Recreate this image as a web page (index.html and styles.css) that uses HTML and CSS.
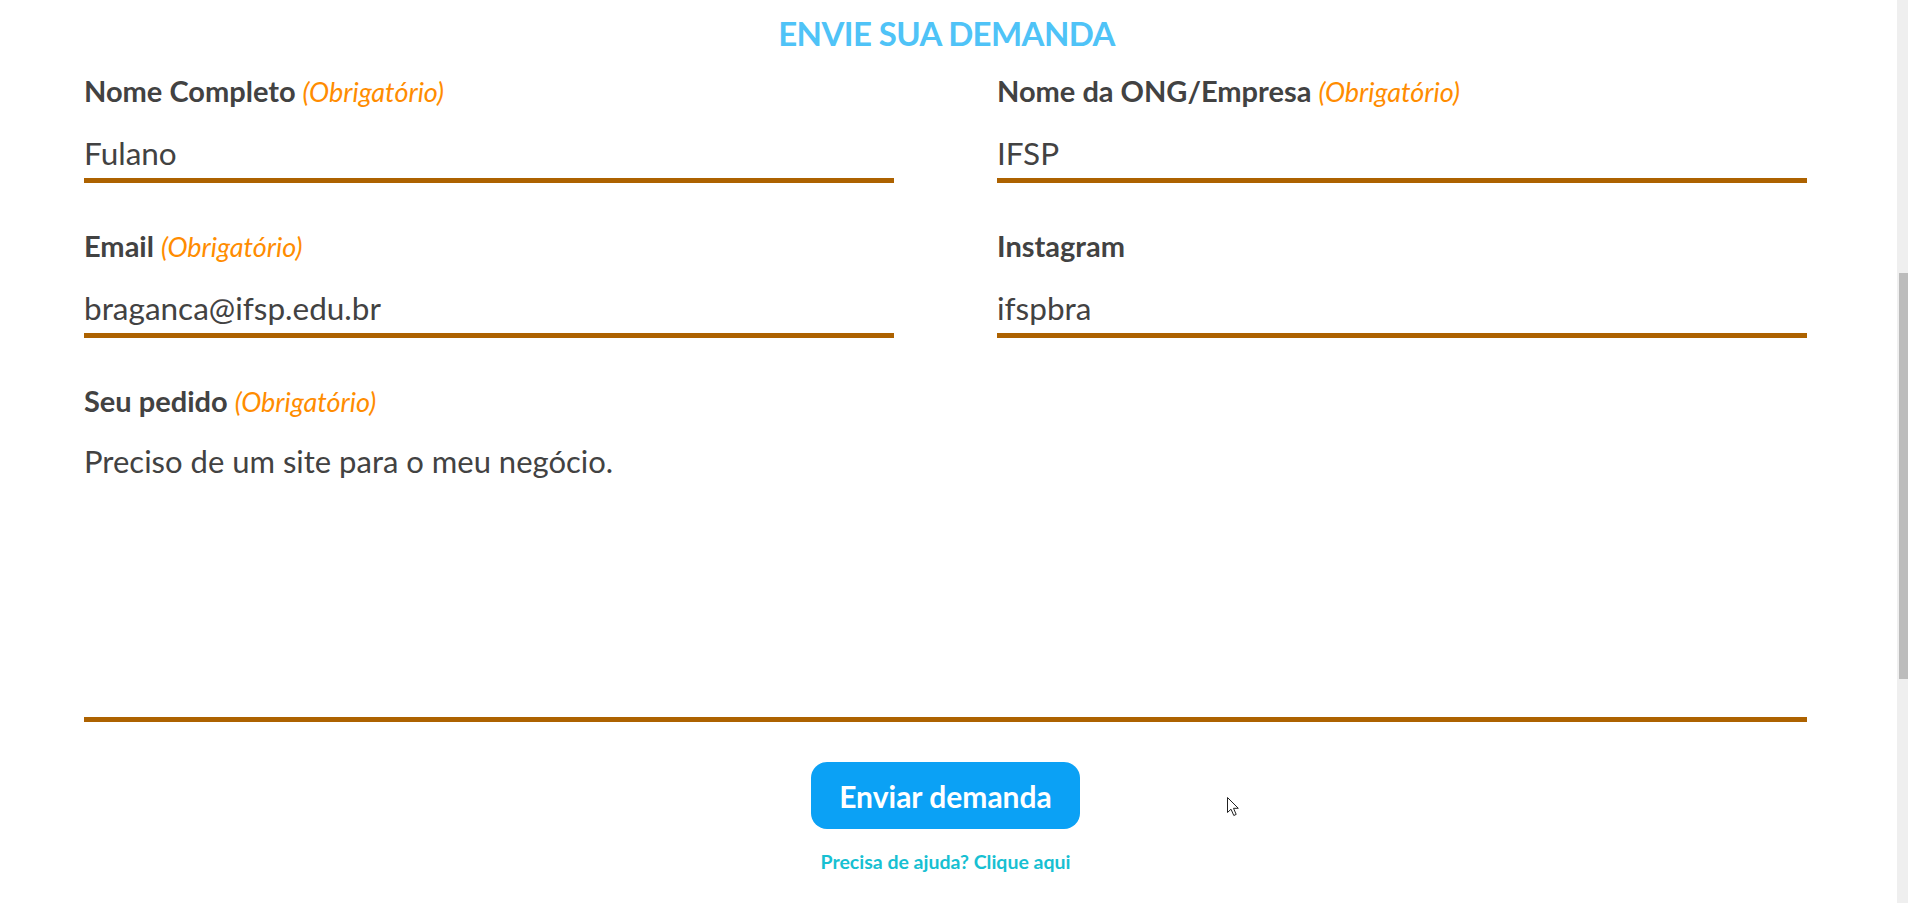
FILE: index.html
```html
<!DOCTYPE html>
<html lang="pt-BR">
<head>
<meta charset="utf-8">
<title>Envie sua demanda</title>
<link rel="stylesheet" href="styles.css">
</head>
<body>
<main class="page">
  <h1 class="title">ENVIE SUA DEMANDA</h1>
  <form class="form">
    <div class="grid">
      <div class="field">
        <label class="label">Nome Completo <em class="req">(Obrigatório)</em></label>
        <input class="input" type="text" value="Fulano">
      </div>
      <div class="field">
        <label class="label">Nome da ONG/Empresa <em class="req">(Obrigatório)</em></label>
        <input class="input" type="text" value="IFSP">
      </div>
      <div class="field">
        <label class="label">Email <em class="req">(Obrigatório)</em></label>
        <input class="input" type="text" value="braganca@ifsp.edu.br">
      </div>
      <div class="field">
        <label class="label">Instagram</label>
        <input class="input" type="text" value="ifspbra">
      </div>
      <div class="field field-wide">
        <label class="label">Seu pedido <em class="req">(Obrigatório)</em></label>
        <textarea class="textarea">Preciso de um site para o meu negócio.</textarea>
      </div>
    </div>
    <div class="actions">
      <button class="btn" type="button">Enviar demanda</button>
      <a class="help" href="#">Precisa de ajuda? Clique aqui</a>
    </div>
  </form>
</main>
<div class="scrollbar"><div class="thumb"></div></div>
<svg class="cursor" width="13" height="20" viewBox="0 0 13 20"><path d="M0.5 0.5 L0.5 15.5 L4 12.2 L6.8 18.5 L9.2 17.4 L6.5 11.3 L11.3 11.3 Z" fill="#fff" stroke="#222" stroke-width="1"/></svg>
</body>
</html>
```

FILE: styles.css
```css
* { box-sizing: border-box; }
html, body { margin: 0; padding: 0; background: #fff; }
body {
  font-family: "Lato", "Liberation Sans", sans-serif;
  color: #424242;
  overflow: hidden;
  height: 903px;
}
.page {
  padding: 17px 101px 0 84px;
}
.title {
  margin: 0;
  text-align: center;
  font-size: 33px;
  line-height: 33px;
  letter-spacing: -0.6px;
  font-weight: 700;
  color: #4fc3f7;
  padding-left: 2px;
}
.form { margin-top: 26px; }
.grid {
  display: grid;
  grid-template-columns: 1fr 1fr;
  column-gap: 103px;
  row-gap: 48px;
}
.field { display: flex; flex-direction: column; }
.field-wide { grid-column: 1 / span 2; }
.label {
  font-size: 29px;
  line-height: 29px;
  height: 29px;
  font-weight: 700;
  color: #424242;
}
.req {
  font-style: italic;
  font-weight: 400;
  font-size: 27px;
  line-height: 1;
  color: #ff8c00;
}
.input {
  margin-top: 23px;
  width: 100%;
  height: 55px;
  padding: 0;
  border: none;
  border-bottom: 5px solid #ad6200;
  font-family: inherit;
  font-size: 31.5px;
  color: #424242;
  background: transparent;
  outline: none;
}
.textarea {
  margin-top: 23px;
  width: 100%;
  height: 284px;
  padding: 5px 0 0 0;
  border: none;
  border-bottom: 5px solid #ad6200;
  font-family: inherit;
  font-size: 31px;
  line-height: 1.2;
  color: #424242;
  background: transparent;
  resize: none;
  outline: none;
}
.actions {
  display: flex;
  flex-direction: column;
  align-items: center;
  margin-top: 40px;
}
.btn {
  width: 269px;
  height: 67px;
  border: none;
  border-radius: 16px;
  background: #0ba1f5;
  color: #fff;
  font-family: inherit;
  font-size: 30px;
  font-weight: 700;
  cursor: pointer;
  padding: 0;
}
.help {
  margin-top: 21px;
  font-size: 19.5px;
  font-weight: 700;
  color: #17c0d2;
  text-decoration: none;
}
.scrollbar {
  position: fixed;
  top: 0;
  right: 0;
  width: 11px;
  height: 903px;
  background: #efefef;
}
.thumb {
  position: absolute;
  top: 273px;
  left: 2px;
  width: 9px;
  height: 406px;
  background: #bcbcbc;
}
.cursor {
  position: absolute;
  left: 1227px;
  top: 797px;
}
```
